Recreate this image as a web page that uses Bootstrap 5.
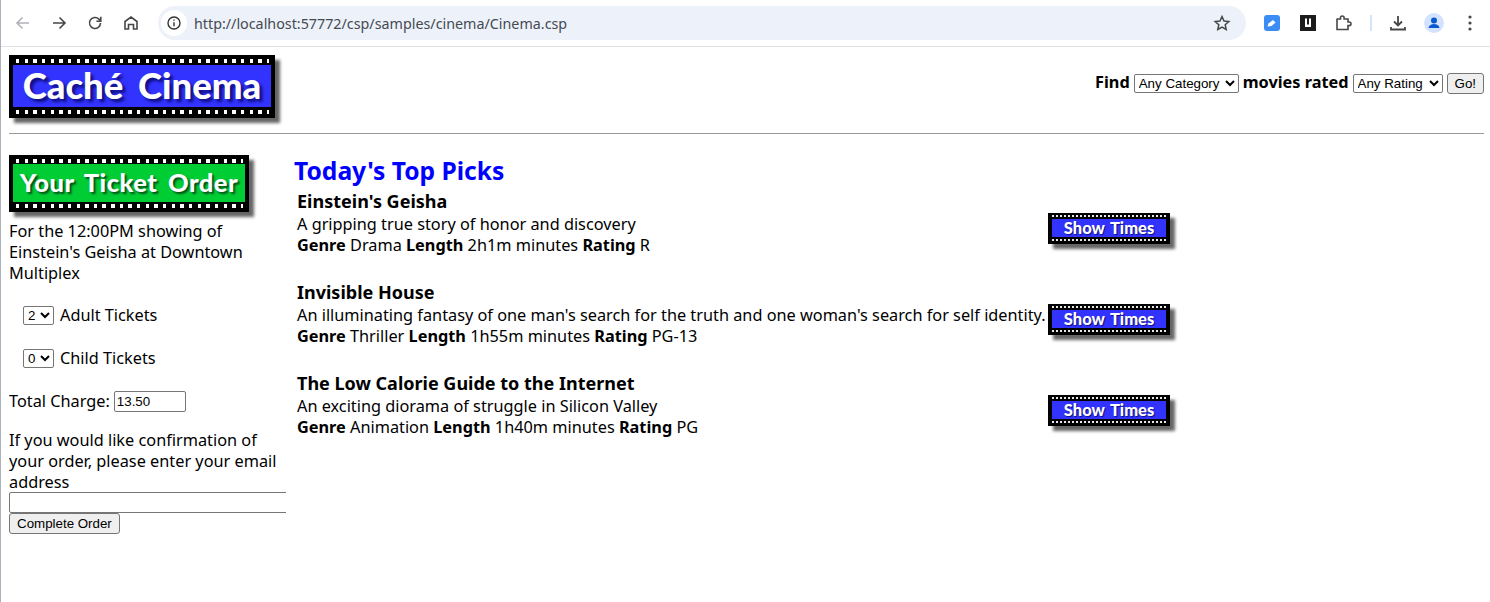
<!DOCTYPE html>
<html lang="en">
<head>
    <meta charset="UTF-8">
    <title>Cache Cinema</title>
    <meta name="viewport" content="width=device-width, initial-scale=1">
    <link href="https://cdn.jsdelivr.net/npm/bootstrap@5.3.0/dist/css/bootstrap.min.css" rel="stylesheet">
    <style>
        html, body { height: 100%; }
        body {
            background: #fff;
            color: #000;
            font-family: "Noto Sans", "DejaVu Sans", sans-serif;
            font-size: 16.3px;
            line-height: 21px;
            overflow: hidden;
            border-left: 1px solid #a9b0ba;
        }
        /* browser toolbar */
        #toolbar {
            height: 47px;
            border-bottom: 1px solid #dfe1e5;
            padding-left: 4px;
            padding-right: 2px;
        }
        .tool-btn {
            width: 36px;
            height: 36px;
            flex: none;
        }
        .tool-btn svg { display: block; }
        #urlBar {
            width: 1088px;
            height: 34px;
            flex: none;
            margin-left: 9px;
            background: #edf2fa;
            border-radius: 17px;
            padding: 0 15px 0 3px;
            color: #444a50;
            font-family: "Noto Sans", sans-serif;
            font-size: 14.3px;
        }
        #urlIcon {
            width: 26px;
            height: 26px;
            background: #fff;
            border-radius: 50%;
            margin-right: 7px;
        }
        .tool-sep {
            width: 2px;
            height: 16px;
            background: #d3e3fd;
            margin: 0 8px;
        }
        /* page */
        #pageTop {
            padding: 8px 6px 0 8px;
        }
        #findForm { font-weight: 700; padding-top: 18px; }
        #findForm span { margin-top: -1px; }
        #findForm select { margin-top: 1px; }
        select, .page-btn, .page-input {
            font-family: "Liberation Sans", sans-serif;
            font-size: 13.33px;
            line-height: normal;
            color: #000;
        }
        select {
            height: 19px;
            padding: 0;
            background: #fff;
            border: 1px solid #767676;
            border-radius: 2px;
            font-weight: 400;
        }
        .select-category { width: 105px; }
        .select-rating { width: 90px; }
        .select-count { width: 31px; }
        .page-btn {
            height: 21px;
            padding: 0 7px;
            background: #efefef;
            border: 1px solid #767676;
            border-radius: 3px;
        }
        .page-input {
            height: 21px;
            padding: 1px 2px;
            background: #fff;
            border: 1px solid #767676;
            border-radius: 2px;
        }
        #pageRule {
            height: 1px;
            background: #999;
            margin: 15px 6px 0 8px;
        }
        /* film strip banners */
        .film {
            position: relative;
            background: #000;
            color: #fff;
            box-shadow: 5px 5px 3px #666;
            font-family: "Lato", sans-serif;
            font-weight: 900;
            text-align: center;
            white-space: nowrap;
            flex: none;
        }
        .film::before, .film::after {
            content: "";
            position: absolute;
            left: 7px;
            right: 6px;
            height: 4px;
            background: repeating-linear-gradient(90deg, #fff 0, #fff 3.400px, #000 3.400px, #000 8.650px);
        }
        .film::before { top: 4px; }
        .film::after { bottom: 4px; }
        .film-logo { width: 266px; height: 63px; padding: 10px 4px 11px; }
        .film-order { width: 240px; height: 57px; padding: 9px 4px 10px; }
        .film-times { width: 122px; height: 31px; padding: 6px 4px 7px; }
        .film-times::before, .film-times::after { left: 4px; right: 4px; height: 2px; background: repeating-linear-gradient(90deg, #e8e8e8 0, #e8e8e8 2px, #000 2px, #000 4px); }
        .film-times::before { top: 2px; }
        .film-times::after { bottom: 3px; }
        .film-face { display: block; height: 100%; }
        .film-logo .film-face {
            background: #3333ff;
            font-size: 36.5px;
            line-height: 40px;
            word-spacing: 6px;
            text-shadow: 3px 3px 3px #0f0f80;
        }
        .film-order .film-face {
            background: #00cc33;
            font-size: 25.5px;
            line-height: 37px;
            word-spacing: 4px;
            letter-spacing: .5px;
            text-shadow: 2px 2px 2px #04501a;
        }
        .film-times .film-face {
            background: #3333ff;
            font-size: 16.5px;
            line-height: 18px;
            word-spacing: 2px;
            text-shadow: 1px 1px 1px #0f0f80;
        }
        /* columns */
        #columns { padding: 21px 0 0 8px; }
        #sidePanel {
            width: 277px;
            overflow: hidden;
            flex: none;
        }
        .side-text { margin: 0; width: 272px; }
        .order-lead { margin-top: 9px; }
        .ticket-line { padding-left: 14px; margin-top: 21px; gap: 6px; }
        .ticket-line + .ticket-line { margin-top: 22px; }
        .total-line { margin-top: 22px; }
        .email-lead { margin-top: 18px; }
        #emailInput { width: 300px; display: block; margin-top: -1px; }
        #orderBtn { display: block; }
        #picksPanel { padding-left: 8px; }
        #picksTitle {
            color: #0000ff;
            font-family: "Noto Sans", sans-serif;
            font-size: 24.6px;
            font-weight: 700;
            line-height: 32px;
            margin: 0 0 2px;
        }
        .movie-row { padding-left: 3px; margin-bottom: 24px; }
        .movie-info { width: 751px; flex: none; white-space: nowrap; }
        .movie-name { font-size: 18px; font-weight: 700; line-height: 24px; margin-bottom: 1px; }
        .movie-row .film { margin-top: 24px; }
    </style>
</head>
<body>

<!-- Browser toolbar -->
<div id="toolbar" class="d-flex align-items-center">
    <div class="tool-btn d-flex align-items-center justify-content-center">
        <svg width="18" height="18" viewBox="0 0 18 18" fill="none" stroke="#b0b3b7" stroke-width="1.6"><path d="M15 9H3M8.500 3.500 3 9l5.500 5.500"/></svg>
    </div>
    <div class="tool-btn d-flex align-items-center justify-content-center">
        <svg width="18" height="18" viewBox="0 0 18 18" fill="none" stroke="#474747" stroke-width="1.6"><path d="M3 9h12M9.500 3.500 15 9l-5.500 5.500"/></svg>
    </div>
    <div class="tool-btn d-flex align-items-center justify-content-center">
        <svg width="18" height="18" viewBox="0 0 18 18" fill="none" stroke="#474747" stroke-width="1.6"><path d="M14.500 9a5.500 5.500 0 1 1-1.600-3.900L14.500 6.700"/><path d="M14.800 2.800v4.400h-4.400"/></svg>
    </div>
    <div class="tool-btn d-flex align-items-center justify-content-center">
        <svg width="18" height="18" viewBox="0 0 18 18" fill="none" stroke="#474747" stroke-width="1.6"><path d="M3 15V7.500L9 3l6 4.500V15h-3.500v-4.500h-5V15z"/></svg>
    </div>
    <div id="urlBar" class="d-flex align-items-center">
        <div id="urlIcon" class="d-flex align-items-center justify-content-center">
            <svg width="16" height="16" viewBox="0 0 16 16" fill="none" stroke="#333" stroke-width="1.4"><circle cx="8" cy="8" r="6"/><path d="M8 7.200v4M8 4.500v1.300"/></svg>
        </div>
        <span class="flex-grow-1">http://localhost:57772/csp/samples/cinema/Cinema.csp</span>
        <svg width="18" height="18" viewBox="0 0 18 18" fill="none" stroke="#474747" stroke-width="1.5"><path d="M9 2.500l2 4.500 4.800.5-3.600 3.200 1 4.800L9 13l-4.200 2.500 1-4.800L2.200 7.500 7 7z"/></svg>
    </div>
    <div class="tool-btn d-flex align-items-center justify-content-center ms-2">
        <svg width="16" height="16" viewBox="0 0 16 16"><rect width="16" height="16" rx="3" fill="#3b8df5"/><path d="M3.500 11.500l1-3 4.500-3.500 2.500 2.500-4 3.500z" fill="#fff"/></svg>
    </div>
    <div class="tool-btn d-flex align-items-center justify-content-center">
        <svg width="16" height="16" viewBox="0 0 16 16"><rect width="16" height="16" fill="#1c1c1c"/><path d="M5 3.500h2v6h2v-6h2v8.500H5z" fill="#fff"/></svg>
    </div>
    <div class="tool-btn d-flex align-items-center justify-content-center">
        <svg width="18" height="18" viewBox="0 0 18 18" fill="none" stroke="#474747" stroke-width="1.6"><path d="M2 5h3.500V3.800a1.800 1.800 0 0 1 3.600 0V5H13v3h1.200a1.800 1.800 0 0 1 0 3.600H13V15.500H2v-11z"/></svg>
    </div>
    <div class="tool-sep"></div>
    <div class="tool-btn d-flex align-items-center justify-content-center">
        <svg width="18" height="18" viewBox="0 0 18 18" fill="none" stroke="#474747" stroke-width="1.8"><path d="M9 2v9M5 7.500l4 4 4-4M2 13v2.500h14V13"/></svg>
    </div>
    <div class="tool-btn d-flex align-items-center justify-content-center">
        <svg width="20" height="20" viewBox="0 0 20 20"><circle cx="10" cy="10" r="10" fill="#d3e3fd"/><circle cx="10" cy="7.500" r="3" fill="#0b57d0"/><path d="M4.500 15c.5-3 3-4 5.500-4s5 1 5.500 4z" fill="#0b57d0"/></svg>
    </div>
    <div class="tool-btn d-flex align-items-center justify-content-center">
        <svg width="4" height="16" viewBox="0 0 4 16" fill="#474747"><circle cx="2" cy="2" r="1.600"/><circle cx="2" cy="8" r="1.600"/><circle cx="2" cy="14" r="1.600"/></svg>
    </div>
</div>

<!-- Page header -->
<div id="pageTop" class="d-flex justify-content-between align-items-start">
    <div class="film film-logo"><span class="film-face">Caché Cinema</span></div>
    <form id="findForm" class="d-flex align-items-start gap-1">
        <span>Find</span>
        <select class="select-category"><option>Any Category</option></select>
        <span>movies rated</span>
        <select class="select-rating"><option>Any Rating</option></select>
        <button type="button" class="page-btn">Go!</button>
    </form>
</div>
<div id="pageRule"></div>

<div id="columns" class="d-flex">
    <!-- Ticket order -->
    <div id="sidePanel">
        <div class="film film-order"><span class="film-face">Your Ticket Order</span></div>
        <p class="side-text order-lead">For the 12:00PM showing of Einstein's Geisha at Downtown Multiplex</p>
        <div class="ticket-line d-flex align-items-center">
            <select class="select-count"><option>2</option></select> <span>Adult Tickets</span>
        </div>
        <div class="ticket-line d-flex align-items-center">
            <select class="select-count"><option>0</option></select> <span>Child Tickets</span>
        </div>
        <div class="total-line d-flex align-items-center gap-1">
            <span>Total Charge:</span>
            <input class="page-input" style="width:72px" value="13.50">
        </div>
        <p class="side-text email-lead">If you would like confirmation of your order, please enter your email address</p>
        <input id="emailInput" class="page-input">
        <button id="orderBtn" type="button" class="page-btn">Complete Order</button>
    </div>

    <!-- Movies -->
    <div id="picksPanel">
        <h1 id="picksTitle">Today's Top Picks</h1>
        <div class="movie-row d-flex align-items-start">
            <div class="movie-info">
                <div class="movie-name">Einstein's Geisha</div>
                <div>A gripping true story of honor and discovery</div>
                <div><b>Genre</b> Drama <b>Length</b> 2h1m minutes <b>Rating</b> R</div>
            </div>
            <div class="film film-times"><span class="film-face">Show Times</span></div>
        </div>
        <div class="movie-row d-flex align-items-start">
            <div class="movie-info">
                <div class="movie-name">Invisible House</div>
                <div>An illuminating fantasy of one man's search for the truth and one woman's search for self identity.</div>
                <div><b>Genre</b> Thriller <b>Length</b> 1h55m minutes <b>Rating</b> PG-13</div>
            </div>
            <div class="film film-times"><span class="film-face">Show Times</span></div>
        </div>
        <div class="movie-row d-flex align-items-start">
            <div class="movie-info">
                <div class="movie-name">The Low Calorie Guide to the Internet</div>
                <div>An exciting diorama of struggle in Silicon Valley</div>
                <div><b>Genre</b> Animation <b>Length</b> 1h40m minutes <b>Rating</b> PG</div>
            </div>
            <div class="film film-times"><span class="film-face">Show Times</span></div>
        </div>
    </div>
</div>

<script src="https://cdn.jsdelivr.net/npm/bootstrap@5.3.0/dist/js/bootstrap.bundle.min.js"></script>
</body>
</html>
